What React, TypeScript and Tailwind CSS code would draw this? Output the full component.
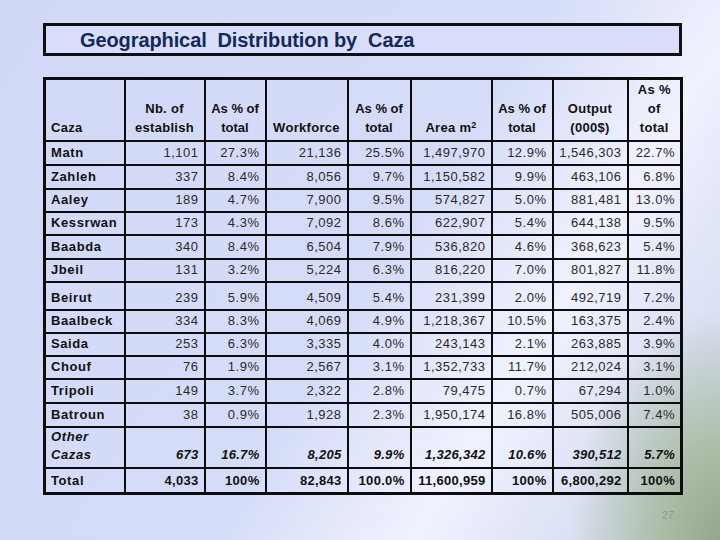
const rows: { name: string; v: string[]; h: string }[] = [
  { name: "Matn", v: ["1,101", "27.3%", "21,136", "25.5%", "1,497,970", "12.9%", "1,546,303", "22.7%"], h: "h-[24px]" },
  { name: "Zahleh", v: ["337", "8.4%", "8,056", "9.7%", "1,150,582", "9.9%", "463,106", "6.8%"], h: "h-[24px]" },
  { name: "Aaley", v: ["189", "4.7%", "7,900", "9.5%", "574,827", "5.0%", "881,481", "13.0%"], h: "h-[23px]" },
  { name: "Kessrwan", v: ["173", "4.3%", "7,092", "8.6%", "622,907", "5.4%", "644,138", "9.5%"], h: "h-[23px]" },
  { name: "Baabda", v: ["340", "8.4%", "6,504", "7.9%", "536,820", "4.6%", "368,623", "5.4%"], h: "h-[24px]" },
  { name: "Jbeil", v: ["131", "3.2%", "5,224", "6.3%", "816,220", "7.0%", "801,827", "11.8%"], h: "h-[23px]" },
  { name: "Beirut", v: ["239", "5.9%", "4,509", "5.4%", "231,399", "2.0%", "492,719", "7.2%"], h: "h-[28px]" },
  { name: "Baalbeck", v: ["334", "8.3%", "4,069", "4.9%", "1,218,367", "10.5%", "163,375", "2.4%"], h: "h-[23px]" },
  { name: "Saida", v: ["253", "6.3%", "3,335", "4.0%", "243,143", "2.1%", "263,885", "3.9%"], h: "h-[23px]" },
  { name: "Chouf", v: ["76", "1.9%", "2,567", "3.1%", "1,352,733", "11.7%", "212,024", "3.1%"], h: "h-[23px]" },
  { name: "Tripoli", v: ["149", "3.7%", "2,322", "2.8%", "79,475", "0.7%", "67,294", "1.0%"], h: "h-[24px]" },
  { name: "Batroun", v: ["38", "0.9%", "1,928", "2.3%", "1,950,174", "16.8%", "505,006", "7.4%"], h: "h-[24px]" },
];

const other = ["673", "16.7%", "8,205", "9.9%", "1,326,342", "10.6%", "390,512", "5.7%"];
const total = ["4,033", "100%", "82,843", "100.0%", "11,600,959", "100%", "6,800,292", "100%"];

const widths = ["w-[80px]", "w-[80px]", "w-[61px]", "w-[82px]", "w-[63px]", "w-[81px]", "w-[61px]", "w-[75px]", "w-[54px]"];

const cell = "border-2 border-[#0d0d0d] align-bottom px-[5px] pb-[3px]";
const head = "border-2 border-[#0d0d0d] align-bottom px-[2px] pb-[3px] whitespace-nowrap";

export default function App() {
  return (
    <div
      className="relative h-[540px] w-[720px] overflow-hidden bg-[radial-gradient(ellipse_150px_230px_at_100%_100%,#94a78d_0%,#adbda8_40%,rgba(205,214,225,0)_100%),linear-gradient(122deg,#d2d9f7_0%,#d5dcf8_52%,#e6eafb_64%,#f0f2fd_71%,#dfe4f7_82%,#cdd6ea_100%)] pt-[23px] pl-[43px]"
      style={{ fontFamily: '"Liberation Sans", Arial, sans-serif' }}
    >
      <div className="flex h-[33px] w-[639px] items-center border-[3px] border-[#101010] bg-[#d8def9] pl-[34px]">
        <h1 className="text-[20px] font-bold tracking-[-0.1px] text-[#13295a] whitespace-pre">
          Geographical  Distribution by  Caza
        </h1>
      </div>

      <table className="mt-[21px] w-[637px] table-fixed border-collapse border-[3px] border-[#0d0d0d] text-[13px] leading-[17px]">
        <colgroup>
          {widths.map((w, i) => (
            <col key={i} className={w} />
          ))}
        </colgroup>
        <thead>
          <tr className="h-[60px] font-bold text-[#111] tracking-[0.3px] leading-[19px]">
            <th className={`${head} pl-[5px] text-left`}>Caza</th>
            <th className={`${head} text-center`}>Nb. of<br />establish</th>
            <th className={`${head} text-center tracking-[0px]`}>As % of<br />total</th>
            <th className={`${head} text-center`}>Workforce</th>
            <th className={`${head} text-center tracking-[0px]`}>As % of<br />total</th>
            <th className={`${head} text-center`}>Area m<sup className="text-[9px]">2</sup></th>
            <th className={`${head} text-center tracking-[0px]`}>As % of<br />total</th>
            <th className={`${head} text-center`}>Output<br />(000$)</th>
            <th className={`${head} text-center`}>As %<br />of<br />total</th>
          </tr>
        </thead>
        <tbody>
          {rows.map((r) => (
            <tr key={r.name} className={r.h}>
              <td className={`${cell} font-bold tracking-[0.6px] text-[#111]`}>{r.name}</td>
              {r.v.map((x, i) => (
                <td key={i} className={`${cell} text-right tracking-[0.5px] text-[#2a2a2a]`}>
                  {x}
                </td>
              ))}
            </tr>
          ))}
          <tr className="h-[39px] font-bold italic text-[#111] leading-[18px]">
            <td className={`${cell} pb-[1px] tracking-[0.6px]`}>Other<br />Cazas</td>
            {other.map((x, i) => (
              <td key={i} className={`${cell} pb-[1px] text-right tracking-[0.3px]`}>
                {x}
              </td>
            ))}
          </tr>
          <tr className="h-[25px] font-bold text-[#111]">
            <td className={`${cell} tracking-[0.6px]`}>Total</td>
            {total.map((x, i) => (
              <td key={i} className={`${cell} text-right tracking-[0.3px]`}>
                {x}
              </td>
            ))}
          </tr>
        </tbody>
      </table>

      <div className="mt-[12px] flex w-[637px] justify-end pr-[6px]">
        <span className="text-[11px] text-[#8a9a8e]">27</span>
      </div>
    </div>
  );
}
